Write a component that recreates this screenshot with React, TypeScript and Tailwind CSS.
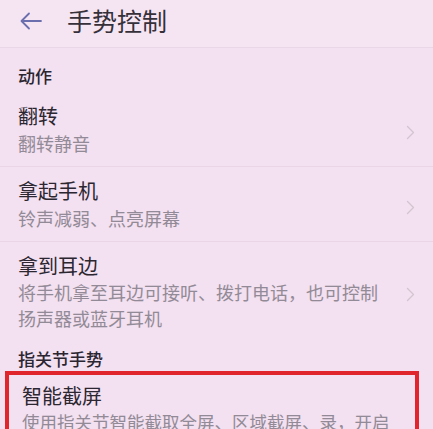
import React from 'react'

const font = { fontFamily: '"Noto Sans CJK SC", "Noto Sans", sans-serif' }

function Chevron() {
  return (
    <svg width="9" height="15" viewBox="0 0 9 15" fill="none" className="shrink-0">
      <path d="M1.5 1.5L7.5 7.5L1.5 13.5" stroke="#d2c4d1" strokeWidth="1.3" strokeLinecap="round" strokeLinejoin="round" />
    </svg>
  )
}

function Row({ title, lines, divider = true }: { title: string; lines: string[]; divider?: boolean }) {
  return (
    <div className={`flex items-center pl-[18px] pr-[18px] pt-[11px] ${divider ? 'pb-[9px] border-b border-[#ead5e7]' : 'pb-[6px]'}`}>
      <div className="flex-1 min-w-0">
        <div className="text-[20px] leading-[26px] text-[#2b2630]">{title}</div>
        {lines.map((l) => (
          <div key={l} className={`text-[18px] text-[#928a96] whitespace-nowrap ${lines.length > 1 ? 'leading-[26px]' : 'leading-[28px]'}`}>
            {l}
          </div>
        ))}
      </div>
      <div className="pl-2 pt-[4px]">
        <Chevron />
      </div>
    </div>
  )
}

export default function App() {
  return (
    <div className="w-[433px] h-[429px] overflow-hidden bg-[#f3e0f0]" style={font}>
      {/* Header */}
      <div className="h-[48px] flex items-center bg-[#f5e5f3] border-b border-[#e9d6e6]">
        <svg width="24" height="20" viewBox="0 0 24 20" fill="none" className="ml-[19px] -mt-[6px]">
          <path d="M22 10H3M10 2.5L2.5 10L10 17.5" stroke="#6b6fae" strokeWidth="1.8" strokeLinecap="round" strokeLinejoin="round" />
        </svg>
        <div className="ml-[24px] text-[25px] leading-[30px] text-[#35303a] -mt-[8px]">手势控制</div>
      </div>

      <div className="pl-[18px] pt-[16px] pb-[4px] text-[17px] leading-[24px] font-medium text-[#2a2530]">动作</div>

      <Row title="翻转" lines={['翻转静音']} />
      <Row title="拿起手机" lines={['铃声减弱、点亮屏幕']} />
      <Row title="拿到耳边" lines={['将手机拿至耳边可接听、拨打电话，也可控制', '扬声器或蓝牙耳机']} divider={false} />

      <div className="pl-[18px] pt-[10px] text-[17px] leading-[24px] font-medium text-[#2a2530]">指关节手势</div>

      <div className="ml-[5px] w-[414px] border-[4px] border-[#e0262c] pl-[13px] pt-[8px]">
        <div className="text-[20px] leading-[26px] text-[#2b2630]">智能截屏</div>
        <div className="text-[17.5px] leading-[26px] text-[#928a96] whitespace-nowrap">使用指关节智能截取全屏、区域截屏、录，开启</div>
      </div>
    </div>
  )
}
